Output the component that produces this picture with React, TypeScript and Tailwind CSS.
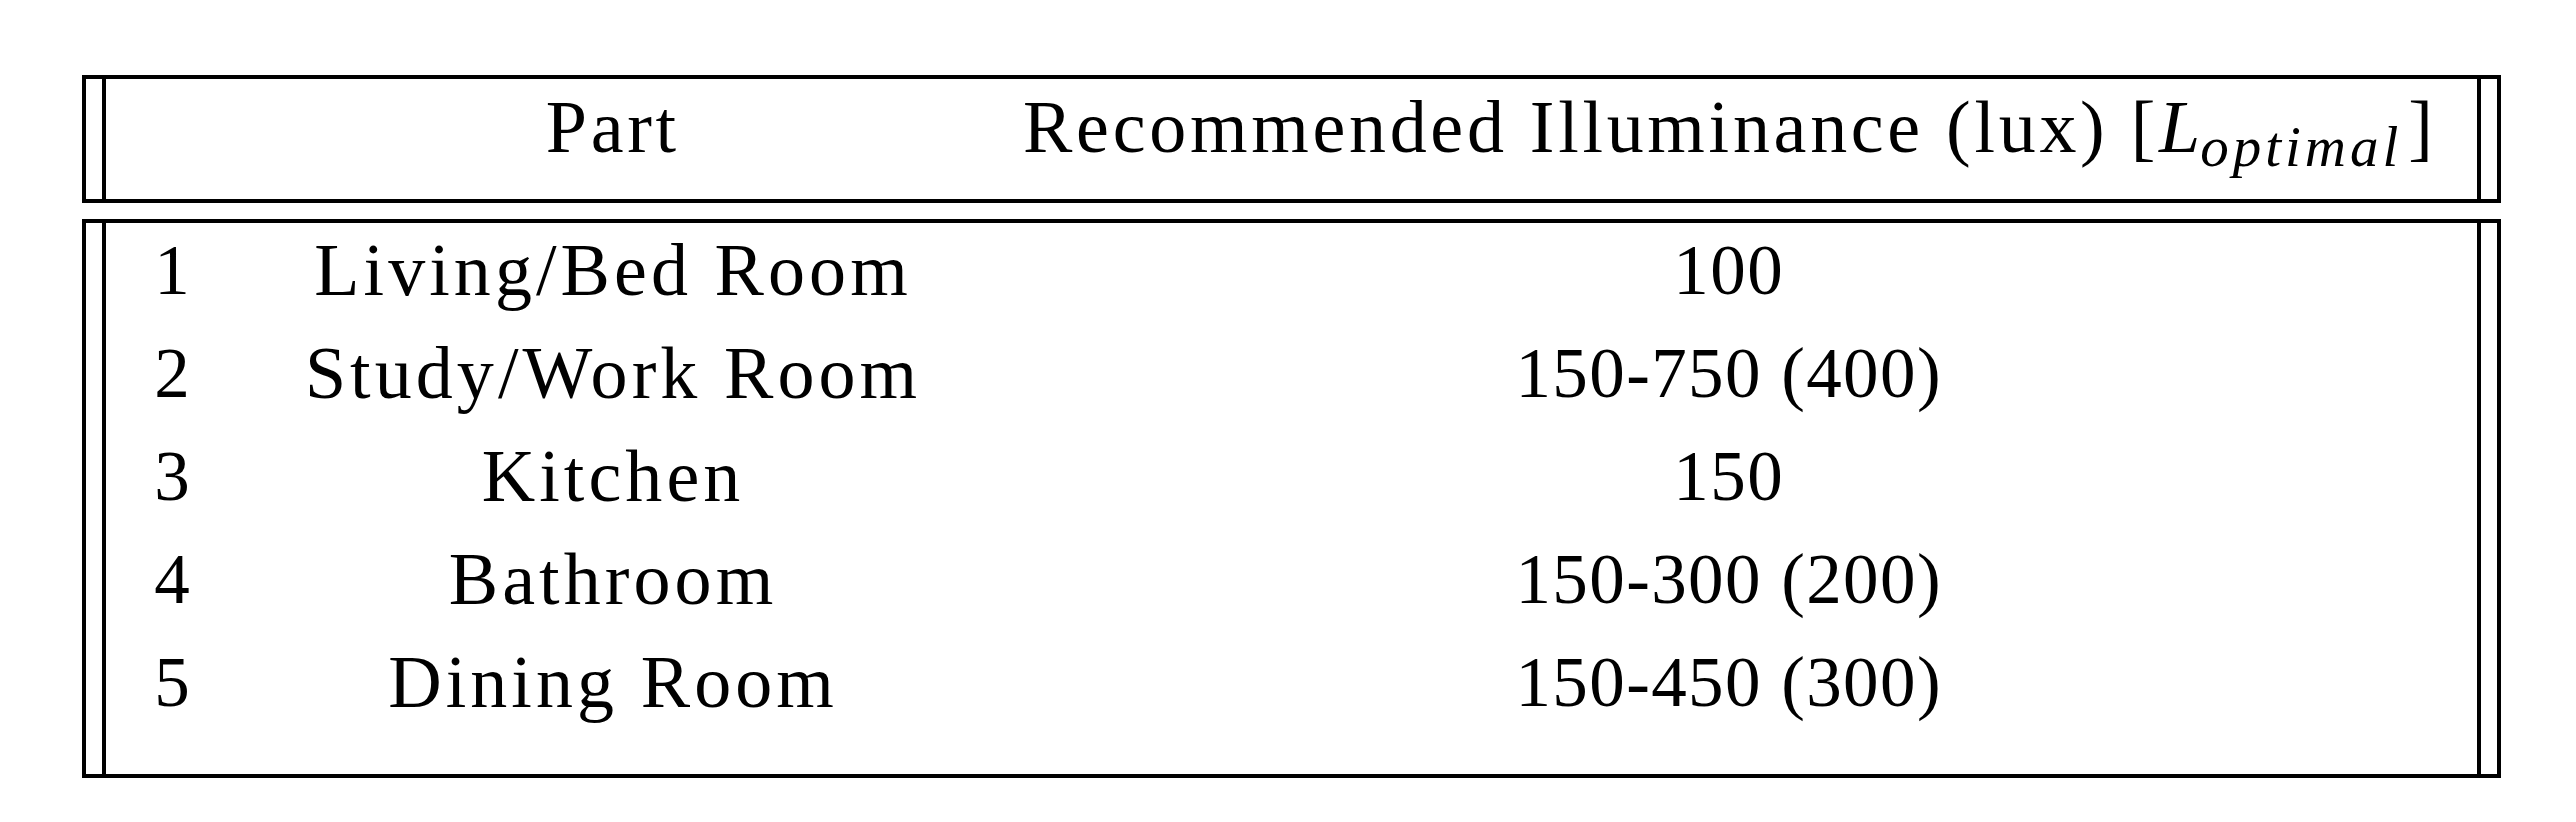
export default function App() {
  const rows: [string, string, string][] = [
    ["1", "Living/Bed Room", "100"],
    ["2", "Study/Work Room", "150-750 (400)"],
    ["3", "Kitchen", "150"],
    ["4", "Bathroom", "150-300 (200)"],
    ["5", "Dining Room", "150-450 (300)"],
  ];
  return (
    <div className="w-[2576px] h-[822px] bg-white text-black font-['Liberation_Serif',serif] text-[71px]">
      <div className="ml-[82px] pt-[75px] w-[2419px] flex flex-col gap-4">
        <div className="border-4 border-black px-4 flex">
          <div className="flex-1 border-x-4 border-black h-[120px] grid grid-cols-[132px_746px_1488px_1fr] leading-[95px] pt-px">
            <div />
            <div className="text-center text-[74px] tracking-[0.05em] pl-[0.05em] whitespace-nowrap">Part</div>
            <div className="text-center whitespace-nowrap">
              <span className="text-[74px] tracking-[0.05em]">Recommended Illuminance (lux) [</span>
              <span className="italic text-[74px]">L</span>
              <span className="italic text-[57px] leading-none align-[-14px] tracking-[0.07em]">optimal</span>
              <span className="pl-[6px] text-[74px]">]</span>
            </div>
          </div>
        </div>
        <div className="border-4 border-black px-4 flex">
          <div className="flex-1 border-x-4 border-black flex flex-col pb-[36px]">
            {rows.map(([n, part, lux]) => (
              <div
                key={n}
                className="h-[103px] grid grid-cols-[132px_746px_1488px_1fr] leading-[95px]"
              >
                <div className="text-center">{n}</div>
                <div className="text-center text-[74px] tracking-[0.055em] pl-[0.055em] whitespace-nowrap">{part}</div>
                <div className="text-center tracking-[0.02em] pl-[0.02em] whitespace-nowrap">{lux}</div>
                <div />
              </div>
            ))}
          </div>
        </div>
      </div>
    </div>
  );
}
